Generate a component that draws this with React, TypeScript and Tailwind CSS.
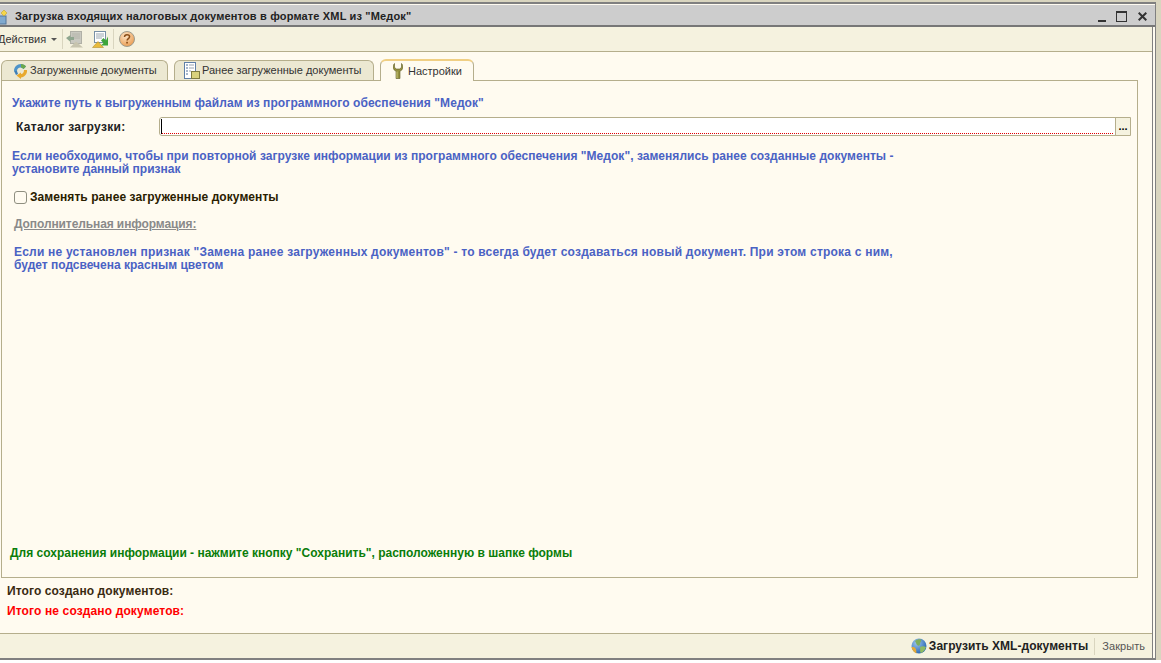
import React from "react";

const font = { fontFamily: '"Liberation Sans", Arial, sans-serif' };

function Globe({ size = 16 }: { size?: number }) {
  return (
    <svg width={size} height={size} viewBox="0 0 16 16" className="shrink-0">
      <defs>
        <radialGradient id="gb" cx="0.35" cy="0.3" r="0.8">
          <stop offset="0" stopColor="#9cc4ec" />
          <stop offset="1" stopColor="#1f5fae" />
        </radialGradient>
      </defs>
      <circle cx="8" cy="8" r="7.500" fill="url(#gb)" />
      <path d="M4 3c2-1.500 4-2 6-1.500 1 1-1 2.500-1 4.500s-2 2-3 1-1-3-2-4z" fill="#7fae5c" />
      <path d="M9 9c2-1 4-1 6 0-1 3-3 5.500-5 6-1.500-1-.5-4-1-6z" fill="#8fbb62" />
      <path d="M.5 9c.5 3 2.500 5.500 5 6.500L5 11 3 9z" fill="#e2a93a" />
    </svg>
  );
}

function SyncIcon() {
  return (
    <svg width="15" height="16" viewBox="0 0 15 16" className="shrink-0">
      <path d="M1 8C1 4 4 1 8 1c2 0 4 1 5 2.500L10.500 6C9.500 5 8.500 4.500 7.500 4.500 5.500 4.500 4 6 4 8z" fill="#4f94c9" />
      <path d="M8 1c2 0 4 1 5 2.500L10.500 6C9.800 5.200 9 4.800 8 4.600z" fill="#6aa84a" />
      <path d="M14 7c.5 4-2.500 7-6 7.500v1.500L3.500 12.500 8 9.500V11c2 0 3-2 3-4z" fill="#e8a92e" />
      <path d="M1 8l3 0 1 3-2 1z" fill="#3f7fb8" />
    </svg>
  );
}

function DocListIcon() {
  return (
    <svg width="16" height="18" viewBox="0 0 16 18" className="shrink-0">
      <rect x="0.500" y="0.500" width="11" height="16" fill="#ffffff" stroke="#5f7fa8" />
      <path d="M2 3h2M2 6h2M2 9h2M2 12h2" stroke="#4f6f9a" />
      <path d="M5 3h5M5 6h5M5 9h2" stroke="#9aa4b0" />
      <rect x="7.500" y="9.500" width="8" height="7" fill="#d9d27c" stroke="#7f7c40" />
    </svg>
  );
}

function WrenchIcon() {
  return (
    <svg width="10" height="16" viewBox="0 0 10 16" className="shrink-0">
      <path d="M1.500 0.500C.5 1.500 0 3 0 4.500 0 6 1.500 7.500 3 8v7.500h4V8c1.500-.5 3-2 3-3.500 0-1.500-.5-3-1.500-4V4.500L6.500 6h-3L1.500 4.500z" fill="#94913f" stroke="#5f5c28" strokeWidth="0.600" />
      <path d="M4 8.500v6.500" stroke="#c9c67c" />
    </svg>
  );
}

function GrayDocIcon() {
  return (
    <svg width="18" height="17" viewBox="0 0 18 17">
      <rect x="4.500" y="0.500" width="11" height="12" fill="#c9c9c0" stroke="#b0b0a6" />
      <path d="M6 3h8M6 5h8M6 7h8" stroke="#b4b4aa" />
      <path d="M0 7l4.500-3v2H8v3H4.500v2z" fill="#8fa68f" />
      <path d="M4 16.500l6-6 7 6z" fill="#c7c4ae" />
    </svg>
  );
}

function ColorDocIcon() {
  return (
    <svg width="17" height="17" viewBox="0 0 17 17">
      <rect x="2.500" y="0.500" width="11" height="11" fill="#ffffff" stroke="#7890a6" />
      <path d="M4 3h8M4 5h8M4 7h6" stroke="#9aa6b0" />
      <path d="M0.500 16.500l5.500-6 5.500 6z" fill="#e8bb3c" stroke="#a98420" strokeWidth="0.500" />
      <path d="M16 5.500v9h-7l2.500-2.500L9 9.500 11.500 7l2.500 2.500z" fill="#3ca53a" />
    </svg>
  );
}

function HelpIcon() {
  return (
    <svg width="16" height="16" viewBox="0 0 16 16">
      <defs>
        <radialGradient id="hg" cx="0.4" cy="0.3" r="0.75">
          <stop offset="0" stopColor="#fbe3c4" />
          <stop offset="1" stopColor="#ea9a4e" />
        </radialGradient>
      </defs>
      <circle cx="8" cy="8" r="7.500" fill="url(#hg)" stroke="#9d9d90" />
      <path d="M5.500 6c0-1.500 1-2.300 2.500-2.300s2.600.8 2.600 2.100c0 1.800-2.500 1.700-2.500 3.700" fill="none" stroke="#8a4e18" strokeWidth="1.500" />
      <rect x="7.200" y="10.800" width="1.700" height="1.700" fill="#8a4e18" />
    </svg>
  );
}

function Tab({ icon, label, active, width, gap }: { icon: React.ReactNode; label: string; active?: boolean; width: string; gap: string }) {
  return (
    <div
      className={
        "flex items-center rounded-t-[6px] border border-b-0 border-[#b5ae8c] text-[11px] text-[#333333] " +
        width +
        " " +
        gap +
        (active ? " relative z-10 -mb-px h-[22px] border-t-2 border-t-[#f0cf84] bg-[#fffbf0]" : " h-[20px] bg-[#ece8d2]")
      }
    >
      {icon}
      <span>{label}</span>
    </div>
  );
}

export default function App() {
  return (
    <div style={font} className="flex h-[663px] w-[1161px] flex-col overflow-hidden bg-white">
      <div className="flex h-[660px] w-full flex-col bg-[#d9d5bf] pr-[5px] pt-[2px]">
        <div className="flex min-h-0 flex-1 flex-col border-b-2 border-r border-t-2 border-[#808080] bg-[#fffbf0] pt-px">
          <div className="flex h-[22px] shrink-0 items-center border-b-2 border-[#777777] bg-[#cdcdcd] pt-[3px]">
            <svg width="14" height="16" viewBox="0 0 14 16" className="ml-[-3px] shrink-0">
              <rect x="0" y="7" width="9" height="8" fill="#7fa9cf" stroke="#55779a" />
              <path d="M7 1l3 3-3 3-3-3z" fill="#f5d64a" stroke="#b79a20" strokeWidth="0.500" />
            </svg>
            <span className="ml-[4px] text-[11px] font-bold tracking-[0.16px] text-[#222222]">
              Загрузка входящих налоговых документов в формате XML из "Медок"
            </span>
            <div className="ml-auto flex items-center">
              <div className="mr-[10px] mt-[8px] h-[2px] w-[8px] bg-[#333333]" />
              <div className="mr-[11px] h-[11px] w-[11px] border border-t-2 border-[#333333]" />
              <svg width="9" height="9" viewBox="0 0 9 9" className="mr-[8px]">
                <path d="M.7.7l7.600 7.600M8.300.7L.7 8.300" stroke="#333333" strokeWidth="2" />
              </svg>
            </div>
          </div>

          <div className="flex min-h-0 flex-1 flex-col pr-[2px]">
            <div className="flex min-h-0 flex-1 flex-col border-r border-[#808080]">
              <div className="flex h-[25px] shrink-0 items-center border-b border-[#b5ae8c] bg-[#f5f2df] text-[11px] text-[#333333]">
                <span className="ml-[-2px]">Действия</span>
                <span className="ml-[5px] mt-[1px] h-0 w-0 border-x-[3px] border-t-[3px] border-x-transparent border-t-[#555555]" />
                <div className="ml-[5px] h-[20px] w-px bg-[#d9d5bf]" />
                <div className="ml-[3px]"><GrayDocIcon /></div>
                <div className="ml-[8px]"><ColorDocIcon /></div>
                <div className="ml-[4px] h-[20px] w-px bg-[#d9d5bf]" />
                <div className="ml-[5px]"><HelpIcon /></div>
              </div>

              <div className="flex min-h-0 flex-1 flex-col px-[1px]">
                <div className="mt-[7px] flex h-[21px] shrink-0 items-end gap-[6px]">
                  <Tab width="w-[167px]" gap="gap-[2px] pl-[11px]" icon={<SyncIcon />} label="Загруженные документы" />
                  <Tab width="w-[200px]" gap="gap-[2px] pl-[9px]" icon={<DocListIcon />} label="Ранее загруженные документы" />
                  <Tab active width="w-[94px]" gap="gap-[5px] pl-[12px]" icon={<WrenchIcon />} label="Настройки" />
                </div>

                <div className="mr-[13px] flex h-[498px] shrink-0 flex-col border border-[#b5ae8c] bg-[#fffbf0] pl-[10px] pr-[6px]">
                  <div className="mt-[15px] text-[12px] font-bold leading-[14px] tracking-[0.09px] text-[#4a62c4]">
                    Укажите путь к выгруженным файлам из программного обеспечения "Медок"
                  </div>
                  <div className="mt-[7px] flex h-[19px] items-center">
                    <span className="ml-[4px] w-[143px] text-[12px] font-bold tracking-[0.3px] text-[#222222]">Каталог загрузки:</span>
                    <div className="relative flex h-[19px] flex-1 items-stretch rounded-l-[3px] border border-[#b5ae8c] bg-white">
                      <div className="my-[1px] ml-[1px] w-px bg-black" />
                      <div className="absolute bottom-[1px] left-[2px] right-[16px] h-px bg-[repeating-linear-gradient(90deg,#e00000_0_1px,transparent_1px_2px)]" />
                      <div className="ml-auto flex w-[15px] items-center justify-center border-l border-[#b5ae8c] bg-[#f5f2df] text-[11px] font-bold leading-none text-black">
                        ...
                      </div>
                    </div>
                  </div>
                  <div className="mt-[14px] text-[12px] font-bold leading-[13px] text-[#4a62c4]">
                    <span className="tracking-[0.04px]">
                      Если необходимо, чтобы при повторной загрузке информации из программного обеспечения "Медок", заменялись ранее созданные документы -
                    </span>
                    <br />
                    установите данный признак
                  </div>
                  <div className="mt-[13px] flex h-[16px] items-center">
                    <div className="ml-[2px] h-[13px] w-[13px] rounded-[3px] border border-[#8f8f80] bg-[#fffbf0]" />
                    <span className="ml-[3px] text-[12px] font-bold tracking-[0.07px] text-[#2a2000]">Заменять ранее загруженные документы</span>
                  </div>
                  <div className="ml-[2px] mt-[12px] text-[12px] font-bold leading-[14px] tracking-[-0.1px] text-[#8a8a8a] underline">
                    Дополнительная информация:
                  </div>
                  <div className="ml-[2px] mt-[15px] text-[12px] font-bold leading-[13px] text-[#4a62c4]">
                    <span className="tracking-[0.22px]">
                      Если не установлен признак "Замена ранее загруженных документов" - то всегда будет создаваться новый документ. При этом строка с ним,
                    </span>
                    <br />
                    будет подсвечена красным цветом
                  </div>
                  <div className="mb-[17px] ml-[-2px] mt-auto text-[12px] font-bold leading-[14px] text-[#0a7d0a]">
                    Для сохранения информации - нажмите кнопку "Сохранить", расположенную в шапке формы
                  </div>
                </div>

                <div className="ml-[6px] mt-[6px] text-[12px] font-bold leading-[14px] tracking-[0.1px] text-[#3a2a10]">Итого создано документов:</div>
                <div className="ml-[6px] mt-[6px] text-[12px] font-bold leading-[14px] tracking-[0.13px] text-[#ff0000]">Итого не создано докуметов:</div>
              </div>

              <div className="flex h-[25px] shrink-0 items-center justify-end border-t border-[#b5ae8c] bg-[#f5f2df]">
                <Globe />
                <span className="ml-[2px] text-[12px] font-bold tracking-[0.04px] text-[#222222]">Загрузить XML-документы</span>
                <div className="ml-[6px] mr-[7px] h-[17px] w-px bg-[#d9d5bf]" />
                <span className="mr-[7px] text-[11px] tracking-[0.05px] text-[#555555]">Закрыть</span>
              </div>
            </div>
          </div>
        </div>
      </div>
    </div>
  );
}
